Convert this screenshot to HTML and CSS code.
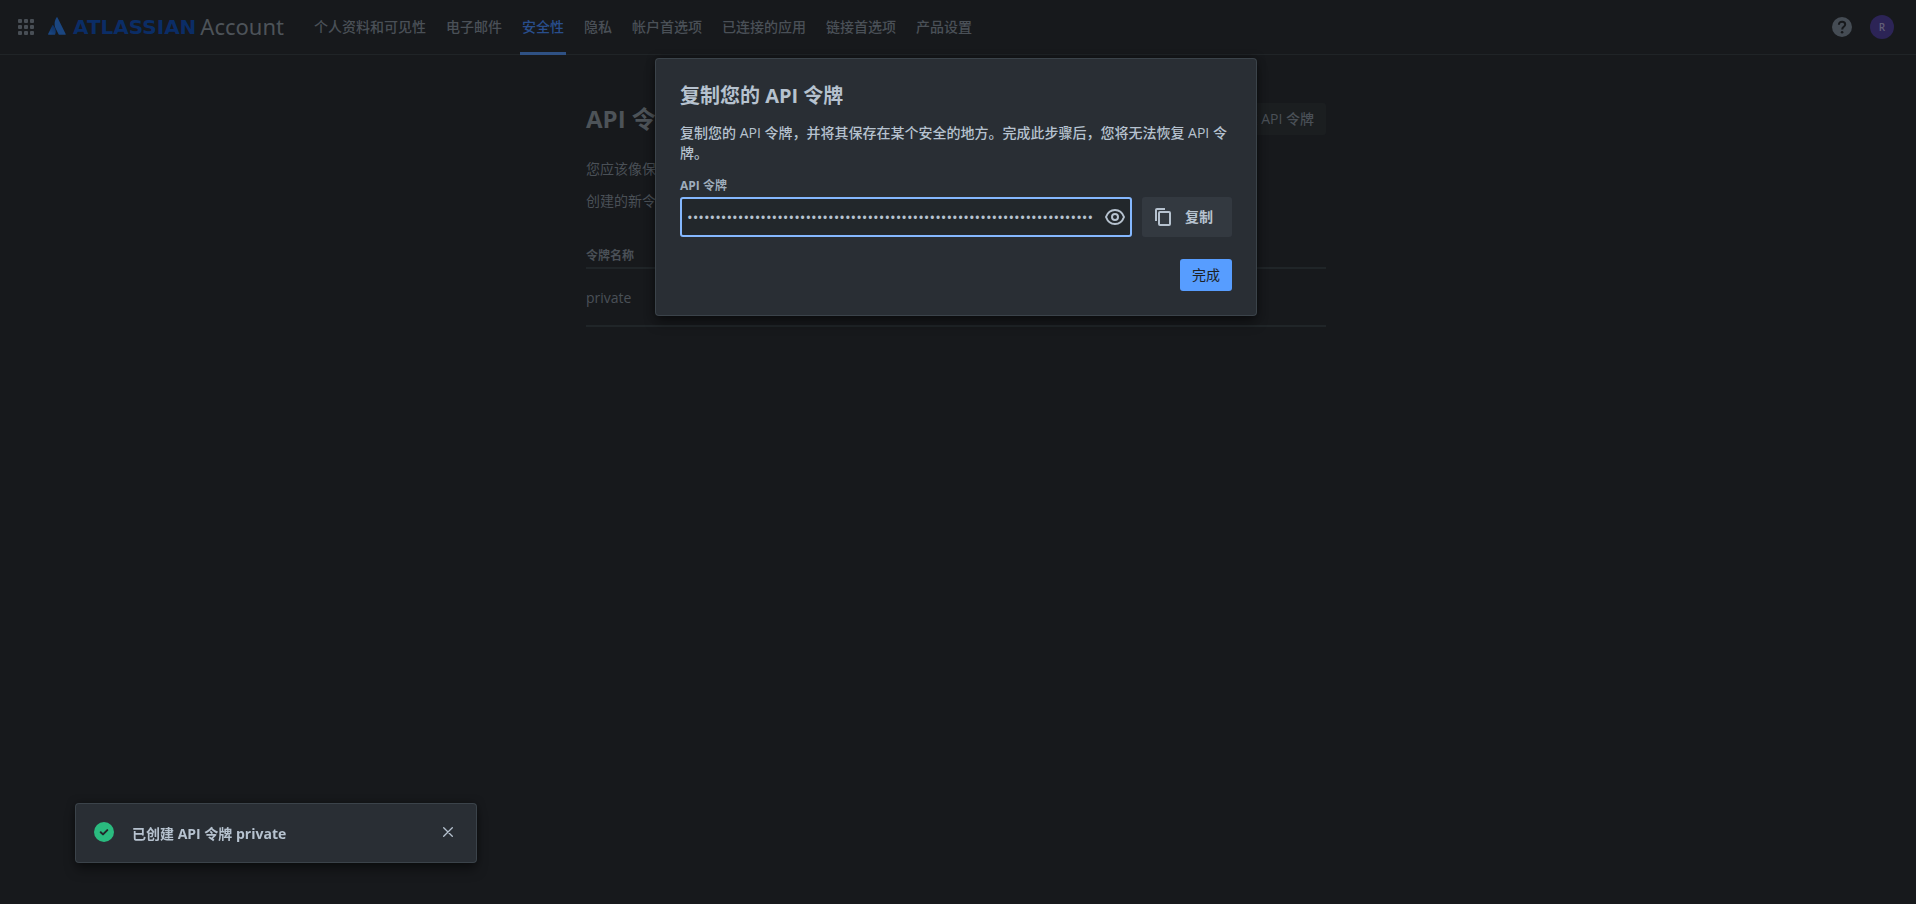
FILE: index.html
```html
<!DOCTYPE html>
<html lang="zh-CN">
<head>
<meta charset="utf-8">
<meta name="viewport" content="width=device-width, initial-scale=1">
<title>API 令牌 - Atlassian Account</title>
<link rel="stylesheet" href="styles.css">
</head>
<body>
<header class="topbar">
  <button class="icon-button switcher" type="button" aria-label="切换到">
    <svg width="16" height="16" viewBox="0 0 16 16" fill="currentColor" aria-hidden="true">
      <rect x="0" y="0" width="4" height="4" rx="1"/><rect x="6" y="0" width="4" height="4" rx="1"/><rect x="12" y="0" width="4" height="4" rx="1"/>
      <rect x="0" y="6" width="4" height="4" rx="1"/><rect x="6" y="6" width="4" height="4" rx="1"/><rect x="12" y="6" width="4" height="4" rx="1"/>
      <rect x="0" y="12" width="4" height="4" rx="1"/><rect x="6" y="12" width="4" height="4" rx="1"/><rect x="12" y="12" width="4" height="4" rx="1"/>
    </svg>
  </button>
  <a class="brand" href="#">
    <svg class="brand-mark" width="18" height="18" viewBox="0 0 18 18" aria-hidden="true">
      <defs><linearGradient id="mark" x1="1" y1="0" x2="0.4" y2="1"><stop offset="0" stop-color="#092a5c"/><stop offset="1" stop-color="#1b4680"/></linearGradient></defs>
      <path d="M5.3 8.2c-.3-.3-.7-.3-.9.1L.1 16.900c-.2.4 0 .8.500.8h6c.2 0 .4-.1.500-.3C8.400 14.800 7.600 10.700 5.300 8.200z" fill="url(#mark)"/>
      <path d="M8.500.5C6.100 4.300 6.200 8.500 7.800 11.700l2.900 5.700c.1.200.3.300.5.300h6c.4 0 .7-.4.500-.8L9.500.5c-.2-.4-.8-.4-1 0z" fill="#1b4680"/>
    </svg>
    <span class="brand-name">ATLASSIAN</span>
    <span class="brand-product">Account</span>
  </a>
  <nav class="tabs" aria-label="帐户">
    <a class="tab" href="#">个人资料和可见性</a>
    <a class="tab" href="#">电子邮件</a>
    <a class="tab tab-active" href="#" aria-current="page">安全性</a>
    <a class="tab" href="#">隐私</a>
    <a class="tab" href="#">帐户首选项</a>
    <a class="tab" href="#">已连接的应用</a>
    <a class="tab" href="#">链接首选项</a>
    <a class="tab" href="#">产品设置</a>
  </nav>
  <div class="topbar-end">
    <button class="icon-button" type="button" aria-label="帮助">
      <svg width="20" height="20" viewBox="0 0 20 20" aria-hidden="true">
        <circle cx="10" cy="10" r="10" fill="#454c54"/>
        <path d="M6.900 7.800c0-1.900 1.300-3 3.200-3s3.100 1.200 3.100 2.700c0 2.400-3 2.300-3 4.900" fill="none" stroke="#17191c" stroke-width="2"/>
        <circle cx="10.100" cy="15.300" r="1.300" fill="#17191c"/>
      </svg>
    </button>
    <button class="avatar" type="button" aria-label="个人资料">R</button>
  </div>
</header>

<div class="content">
  <main class="page">
    <div class="page-head">
      <h1 class="page-title">API 令牌</h1>
      <button class="create-button" type="button">创建 API 令牌</button>
    </div>
    <p class="page-text">您应该像保护其他任何密码一样保护 API 令牌。</p>
    <p class="page-text">创建的新令牌可能需要一分钟才能生效。</p>
    <table class="tokens">
      <thead><tr><th scope="col">令牌名称</th></tr></thead>
      <tbody><tr><td>private</td></tr></tbody>
    </table>
  </main>
</div>

<div class="modal-layer">
  <section class="modal" role="dialog" aria-modal="true" aria-labelledby="modal-title">
    <h2 class="modal-title" id="modal-title">复制您的 API 令牌</h2>
    <p class="modal-text">复制您的 API 令牌，并将其保存在某个安全的地方。完成此步骤后，您将无法恢复 API 令牌。</p>
    <label class="field-label" for="token">API 令牌</label>
    <div class="field-row">
      <div class="field">
        <input class="field-input" id="token" type="password" readonly value="0123456789012345678901234567890123456789012345678901234567890123456789012345678901234567890123456789">
        <button class="icon-button" type="button" aria-label="显示令牌">
          <svg width="20" height="16" viewBox="0 0 20 16" fill="none" stroke="currentColor" stroke-width="2" aria-hidden="true">
            <path d="M1 8C2.600 3.700 5.900 1 10 1s7.400 2.700 9 7c-1.600 4.300-4.900 7-9 7S2.600 12.300 1 8z"/>
            <circle cx="10" cy="8" r="3"/>
          </svg>
        </button>
      </div>
      <button class="copy-button" type="button">
        <svg width="16" height="18" viewBox="0 0 16 18" fill="none" stroke="currentColor" stroke-width="2" aria-hidden="true">
          <path d="M1 13V2a1 1 0 0 1 1-1h8"/>
          <rect x="4" y="4" width="11" height="13" rx="1"/>
        </svg>
        复制
      </button>
    </div>
    <div class="modal-actions"><button class="done-button" type="button">完成</button></div>
  </section>
</div>

<aside class="flag" role="status">
  <svg width="20" height="20" viewBox="0 0 20 20" aria-hidden="true">
    <circle cx="10" cy="10" r="10" fill="#2abb7f"/>
    <path d="M6.700 10.200l2.300 2.200 4.300-4.300" fill="none" stroke="#22272b" stroke-width="2" stroke-linecap="round" stroke-linejoin="round"/>
  </svg>
  <p class="flag-text">已创建 API 令牌 private</p>
  <button class="icon-button" type="button" aria-label="关闭">
    <svg width="10" height="10" viewBox="0 0 10 10" fill="none" stroke="currentColor" stroke-width="1.300" stroke-linecap="round" aria-hidden="true"><path d="M.7.7l8.600 8.600M9.300.7L.7 9.300"/></svg>
  </button>
</aside>
</body>
</html>
```

FILE: styles.css
```css
* { box-sizing: border-box; }

body {
  margin: 0;
  min-height: 100vh;
  background: #17191c;
  color: #4a5057;
  font: 14px/20px "Open Sans", "Noto Sans CJK SC", sans-serif;
}

h1, h2, p { margin: 0; }
a { color: inherit; text-decoration: none; }
button { font: inherit; color: inherit; border: 0; background: none; padding: 0; }
svg { display: block; flex: none; }

.icon-button { display: flex; align-items: center; justify-content: center; }

/* Top navigation */
.topbar {
  display: flex;
  align-items: stretch;
  height: 55px;
  padding: 0 22px 0 18px;
  border-bottom: 1px solid #202427;
}
.switcher { color: #484e55; }
.brand { display: flex; align-items: center; margin-left: 14px; white-space: nowrap; }
.brand-mark { margin-bottom: 2px; }
.brand-name {
  margin-left: 7px;
  color: #0b2d66;
  font: bold 20px/28px "DejaVu Sans", sans-serif;
}
.brand-product {
  margin-left: 4px;
  padding-bottom: 2px;
  color: #4d5359;
  font-family: "Noto Sans", sans-serif;
  font-size: 22px;
  line-height: 28px;
}
.tabs { display: flex; flex: 1; gap: 16px; margin-left: 28px; }
.tab {
  display: flex;
  align-items: center;
  padding: 0 2px 2px;
  margin-bottom: -1px;
  font-weight: 500;
  white-space: nowrap;
}
.tab-active {
  color: #294e8c;
  background: linear-gradient(#2f5184, #2f5184) bottom / 100% 3px no-repeat;
}
.topbar-end { display: flex; align-items: center; gap: 18px; }
.avatar {
  width: 24px;
  height: 24px;
  border-radius: 50%;
  background: #2c2456;
  color: #625f77;
  font-size: 10px;
  font-weight: 600;
  line-height: 24px;
}

/* Page behind the dialog */
.content { padding: 48px 4px 0 0; }
.page { max-width: 740px; margin: 0 auto; }
.page-head { display: flex; align-items: center; justify-content: space-between; }
.page-title { font-size: 24px; font-weight: 700; line-height: 32px; color: #4d5358; }
.create-button {
  height: 32px;
  padding: 0 12px;
  border-radius: 3px;
  background: #1b1e20;
  font-weight: 500;
}
.page-text { margin-top: 12px; }
.page-head + .page-text { margin-top: 24px; }
.tokens { width: 100%; margin-top: 37px; border-collapse: collapse; text-align: left; }
.tokens th {
  padding: 0 0 3px;
  font-size: 12px;
  font-weight: 700;
  line-height: 16px;
  border-bottom: 2px solid #202528;
}
.tokens td { padding: 19px 0 17px; border-bottom: 2px solid #202528; }

/* Dialog */
.modal-layer {
  position: absolute;
  inset: 0;
  display: flex;
  align-items: flex-start;
  justify-content: center;
  padding: 59px 4px 0 0;
}
.modal {
  width: 600px;
  max-width: 100%;
  padding: 25px 24px 24px;
  border-radius: 3px;
  background: #292e34;
  color: #b6c2cf;
  box-shadow: 0 0 0 1px #3b434a, 0 8px 12px rgba(3, 4, 4, 0.36), 0 0 8px rgba(3, 4, 4, 0.5);
}
.modal-title { font-size: 20px; font-weight: 700; line-height: 24px; }
.modal-text { margin-top: 15px; font-weight: 500; }
.field-label {
  display: block;
  margin-top: 15px;
  color: #9fadbc;
  font-size: 12px;
  font-weight: 700;
  line-height: 16px;
}
.field-row { display: flex; gap: 10px; margin-top: 3px; }
.field {
  display: flex;
  flex: 1;
  align-items: center;
  gap: 12px;
  height: 40px;
  padding: 0 5px;
  border: 2px solid #85b8ff;
  border-radius: 3px;
  background: #22272b;
}
.field-input {
  flex: 1;
  min-width: 0;
  padding: 0;
  border: 0;
  outline: 0;
  background: none;
  color: inherit;
  font: inherit;
  font-size: 15px;
}
.copy-button {
  display: flex;
  align-items: center;
  gap: 14px;
  padding: 0 19px 0 13px;
  border-radius: 3px;
  background: #333940;
  font-weight: 600;
}
.modal-actions { display: flex; justify-content: flex-end; margin-top: 22px; }
.done-button {
  height: 32px;
  padding: 0 12px;
  border-radius: 3px;
  background: #579dff;
  color: #1d2125;
  font-weight: 400;
}

/* Notification */
.flag {
  position: fixed;
  bottom: 42px;
  left: 76px;
  display: flex;
  align-items: center;
  width: 400px;
  height: 58px;
  padding: 0 23px 2px 18px;
  border-radius: 3px;
  background: #292e34;
  color: #b6c2cf;
  box-shadow: 0 0 0 1px #3b434a, 0 8px 12px rgba(3, 4, 4, 0.36), 0 0 8px rgba(3, 4, 4, 0.5);
}
.flag-text { flex: 1; margin-left: 18px; padding-top: 3px; font-weight: 700; }
```
